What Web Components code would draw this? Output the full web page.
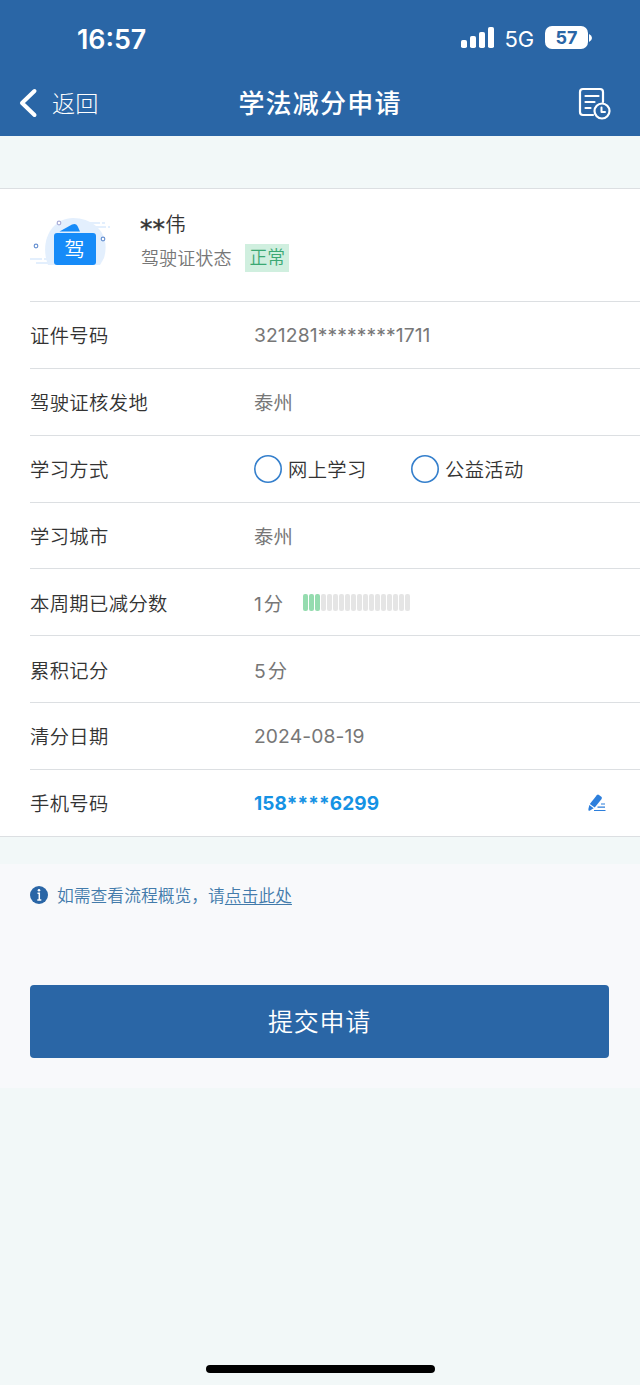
<!DOCTYPE html>
<html lang="zh-CN">
<head>
<meta charset="utf-8">
<meta name="viewport" content="width=640">
<title>学法减分申请</title>
<style>
  body {
    margin: 0;
    background: #f2f8f8;
    font-family: Inter, "Noto Sans CJK SC", sans-serif;
    font-weight: 350;
    color: #333;
  }
</style>
</head>
<body>
<license-app></license-app>
<script>
class StatusBar extends HTMLElement {
  connectedCallback() {
    this.attachShadow({ mode: 'open' }).innerHTML = `
      <style>
        :host {
          display: flex;
          justify-content: space-between;
          align-items: center;
          height: 75px;
          padding: 0 48px 0 77px;
          box-sizing: border-box;
          color: #fff;
        }
        .time { font-size: 26.8px; font-weight: 600; padding-top: 2px; }
        .right { display: flex; align-items: center; }
        .net { font-size: 22px; font-weight: 400; margin: 3px 11px 0 11px; letter-spacing: -.2px; }
        .battery {
          width: 43px;
          height: 23px;
          border-radius: 7px;
          background: #fff;
          color: #2a66a6;
          font-size: 18px;
          font-weight: 700;
          line-height: 23px;
          text-align: center;
        }
        svg { display: block; }
      </style>
      <span class="time">16:57</span>
      <div class="right">
        <svg width="33" height="21" viewBox="0 0 33 21" fill="#fff">
          <rect y="13" width="6" height="8" rx="1.8"/>
          <rect x="9" y="9" width="6" height="12" rx="1.8"/>
          <rect x="18" y="5" width="6" height="16" rx="1.8"/>
          <rect x="27" width="6" height="21" rx="1.8"/>
        </svg>
        <span class="net">5G</span>
        <span class="battery">57</span>
        <svg width="4" height="8" viewBox="0 0 4 8"><path d="M1 0q3 1.5 3 4T1 8z" fill="#fff"/></svg>
      </div>
    `;
  }
}

class NavBar extends HTMLElement {
  connectedCallback() {
    this.attachShadow({ mode: 'open' }).innerHTML = `
      <style>
        :host {
          display: grid;
          grid-template-columns: 1fr auto 1fr;
          align-items: center;
          height: 61px;
          padding: 0 29px 0 19px;
          box-sizing: border-box;
          color: #fff;
        }
        .back { display: flex; align-items: center; gap: 14px; margin-top: -3px; font-size: 23.2px; font-weight: 300; line-height: 30px; }
        .back svg { margin-top: -2px; }
        .title { font-size: 26px; font-weight: 500; letter-spacing: 1.2px; line-height: 34px; padding-left: 10px; margin-top: -3px; }
        .history { justify-self: end; margin-top: -5px; }
        svg { display: block; }
      </style>
      <div class="back">
        <svg width="19" height="30" viewBox="0 0 19 30"><path d="M15.5 3 3 15l12.5 12" fill="none" stroke="#fff" stroke-width="4" stroke-linecap="round" stroke-linejoin="round"/></svg>
        <span>返回</span>
      </div>
      <span class="title"><slot></slot></span>
      <svg class="history" width="33" height="33" viewBox="0 0 33 33" fill="none" stroke="#fff" stroke-width="2.2" stroke-linecap="round" stroke-linejoin="round">
        <path d="M15 28H5q-3 0-3-3V5q0-3 3-3h17q3 0 3 3v10"/>
        <path d="M7.5 9h13M7.5 15h9M7.5 21h5"/>
        <circle cx="24" cy="24" r="7.5"/>
        <path d="M23.5 20.5V25H27" stroke-width="2"/>
      </svg>
    `;
  }
}

class ProfileHead extends HTMLElement {
  connectedCallback() {
    this.attachShadow({ mode: 'open' }).innerHTML = `
      <style>
        :host {
          display: flex;
          height: 112px;
          padding-left: 30px;
          box-sizing: border-box;
        }
        .badge { width: 82px; height: 60px; margin-top: 22px; }
        .info { margin: 18px 0 0 29px; }
        .name { display: flex; font-family: "Noto Sans CJK SC", sans-serif; font-size: 20.5px; line-height: 32px; height: 32px; }
        .mask { font-family: "DejaVu Sans", sans-serif; font-weight: 400; font-size: 25px; line-height: 44px; height: 32px; margin-left: -1px; letter-spacing: .1px; -webkit-text-stroke: .4px currentColor; }
        .state { display: flex; align-items: center; margin-top: 5px; gap: 14px; font-size: 18.1px; color: #777; line-height: 28px; }
        .tag { padding: 0 4px; width: 36px; background: #d0efdf; color: #3aa873; white-space: nowrap; font-size: 17.8px; }
      </style>
      <svg class="badge" viewBox="0 0 82 60">
        <path d="M18 54C9 30 22 7 43 7s38 16 31 40l-4 7z" fill="#e3effd"/>
        <path d="M58 12h17M64 16h16M0 48h24M6 52h13" stroke="#e3effd" stroke-width="2" stroke-dasharray="12 2 4 2"/>
        <path d="M29.5 20.5 42 13.5q4-1.5 5.5 1.5l2.5 5.5z" fill="#168bf8"/>
        <rect x="24" y="22" width="42" height="32" rx="3" fill="#168bf8"/>
        <g fill="#fff" stroke="#6a93d2" stroke-width="1.2">
          <circle cx="6" cy="35" r="1.8"/>
          <circle cx="29" cy="12" r="1.8" stroke="#aaaed8"/>
          <circle cx="73" cy="28" r="1.8"/>
        </g>
        <text x="44.5" y="45.5" fill="#fff" font-size="20.5" text-anchor="middle">驾</text>
      </svg>
      <div class="info">
        <div class="name"><span class="mask">${this.getAttribute('mask')}</span><slot></slot></div>
        <div class="state"><span>驾驶证状态</span><span class="tag">正常</span></div>
      </div>
    `;
  }
}

class InfoRow extends HTMLElement {
  connectedCallback() {
    this.attachShadow({ mode: 'open' }).innerHTML = `
      <style>
        :host {
          display: flex;
          align-items: center;
          height: 66.85px;
          margin-left: 30px;
          padding-top: 1px;
          border-top: 1px solid #dcdfe2;
          box-sizing: border-box;
          font-size: 19.3px;
        }
        .label { width: 224px; letter-spacing: .4px; }
        .value { flex: 1; display: flex; align-items: center; color: #777; font-weight: 400; letter-spacing: .1px; }
      </style>
      <span class="label">${this.getAttribute('label')}</span>
      <div class="value"><slot></slot></div>
    `;
  }
}

class RadioOption extends HTMLElement {
  connectedCallback() {
    this.attachShadow({ mode: 'open' }).innerHTML = `
      <style>
        :host { display: flex; align-items: center; gap: 6px; width: 157px; color: #333; letter-spacing: .4px; font-weight: 350; }
        svg { display: block; }
      </style>
      <svg width="28" height="28"><circle cx="14" cy="14" r="13.2" fill="none" stroke="#347fcc" stroke-width="1.6"/></svg>
      <span><slot></slot></span>
    `;
  }
}

class ScoreMeter extends HTMLElement {
  connectedCallback() {
    const total = Number(this.getAttribute('total'));
    const filled = Number(this.getAttribute('filled'));
    const bars = Array.from({ length: total }, (_, i) => `<i class="${i < filled ? 'on' : ''}"></i>`).join('');

    this.attachShadow({ mode: 'open' }).innerHTML = `
      <style>
        :host { display: flex; gap: 1px; margin-left: 18px; }
        i { width: 5px; height: 17px; border-radius: 2px; background: #e5e5e5; }
        .on { background: #95dcaf; }
      </style>
      ${bars}
    `;
  }
}

class ScoreValue extends HTMLElement {
  connectedCallback() {
    this.attachShadow({ mode: 'open' }).innerHTML = `
      <style>
        :host { display: block; letter-spacing: 2px; }
      </style>
      <slot></slot>
    `;
  }
}

class PhoneValue extends HTMLElement {
  connectedCallback() {
    this.attachShadow({ mode: 'open' }).innerHTML = `
      <style>
        :host { display: flex; flex: 1; justify-content: space-between; align-items: center; padding-right: 34px; color: #1592e4; font-weight: 700; font-size: 19px; }
      </style>
      <span><slot></slot></span>
      <svg width="18" height="18" viewBox="0 0 18 18" fill="#2d7fdc">
        <path d="M8.8 1.2q1-1.2 2.2-.3l2.3 1.8q1.2 1 .3 2.2L6.7 13.6 1.8 10z"/>
        <path d="M1.3 11 5.7 14.3 2 16.6Q0 17.5.4 15z"/>
        <path d="M13 10h4M9.500 13.200H17M6 16.500h11.500" stroke="#2d7fdc" stroke-width="1.2"/>
      </svg>
    `;
  }
}

class FlowHint extends HTMLElement {
  connectedCallback() {
    this.attachShadow({ mode: 'open' }).innerHTML = `
      <style>
        :host { display: flex; align-items: center; gap: 9px; height: 24px; color: #437bab; font-size: 16.8px; font-family: "Noto Sans CJK SC", sans-serif; line-height: 24px; }
        span { margin-top: -1px; }
        a { color: inherit; text-decoration: underline; text-underline-offset: 2px; text-decoration-thickness: 1px; }
      </style>
      <svg width="18" height="18" viewBox="0 0 18 18">
        <circle cx="9" cy="9" r="9" fill="#2a66a6"/>
        <circle cx="9" cy="4.3" r="1.3" fill="#fff"/>
        <path d="M7.5 7.3H9.3V13.5M7.3 14h4" fill="none" stroke="#fff" stroke-width="1.5"/>
      </svg>
      <span>如需查看流程概览，请<a>点击此处</a></span>
    `;
  }
}

class SubmitButton extends HTMLElement {
  connectedCallback() {
    this.attachShadow({ mode: 'open' }).innerHTML = `
      <style>
        :host { display: block; }
        button {
          display: block;
          width: 100%;
          height: 73px;
          padding: 0 0 3px;
          border: 0;
          border-radius: 4px;
          background: #2a66a6;
          color: #fff;
          font: 350 25px "Noto Sans CJK SC", sans-serif;
          letter-spacing: .7px;
        }
      </style>
      <button type="button"><slot></slot></button>
    `;
  }
}

class LicenseApp extends HTMLElement {
  connectedCallback() {
    this.attachShadow({ mode: 'open' }).innerHTML = `
      <style>
        :host { display: flex; flex-direction: column; height: 1385px; }
        header { background: #2a66a6; }
        .card { margin-top: 52px; background: #fff; border-top: 1px solid #dcdfe2; border-bottom: 1px solid #dcdfe2; height: 649px; box-sizing: border-box; }
        .actions { margin-top: 27px; height: 224px; padding: 19px 31px 0 30px; box-sizing: border-box; background: #f8f9fb; }
        submit-button { margin-top: 78px; }
        .home { width: 229px; height: 8px; border-radius: 4px; background: #000; margin: auto auto 12px; }
      </style>
      <header>
        <status-bar></status-bar>
        <nav-bar>学法减分申请</nav-bar>
      </header>
      <section class="card">
        <profile-head mask="**">伟</profile-head>
        <info-row label="证件号码">321281********1711</info-row>
        <info-row label="驾驶证核发地">泰州</info-row>
        <info-row label="学习方式">
          <radio-option>网上学习</radio-option>
          <radio-option>公益活动</radio-option>
        </info-row>
        <info-row label="学习城市">泰州</info-row>
        <info-row label="本周期已减分数"><score-value>1分</score-value><score-meter total="18" filled="3"></score-meter></info-row>
        <info-row label="累积记分"><score-value>5分</score-value></info-row>
        <info-row label="清分日期">2024-08-19</info-row>
        <info-row label="手机号码"><phone-value>158****6299</phone-value></info-row>
      </section>
      <section class="actions">
        <flow-hint></flow-hint>
        <submit-button>提交申请</submit-button>
      </section>
      <div class="home"></div>
    `;
  }
}

customElements.define('status-bar', StatusBar);
customElements.define('nav-bar', NavBar);
customElements.define('profile-head', ProfileHead);
customElements.define('info-row', InfoRow);
customElements.define('radio-option', RadioOption);
customElements.define('score-meter', ScoreMeter);
customElements.define('score-value', ScoreValue);
customElements.define('phone-value', PhoneValue);
customElements.define('flow-hint', FlowHint);
customElements.define('submit-button', SubmitButton);
customElements.define('license-app', LicenseApp);
</script>
</body>
</html>
